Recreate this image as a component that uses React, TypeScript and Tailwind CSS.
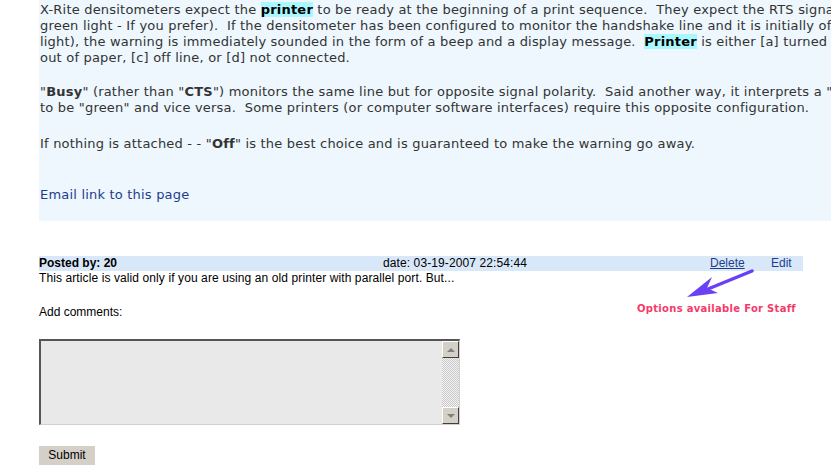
import React from "react";

const verdana = { fontFamily: '"DejaVu Sans", Verdana, sans-serif' };
const arial = { fontFamily: '"Liberation Sans", Arial, sans-serif' };

function Hl({ children }: { children: React.ReactNode }) {
  return <b className="bg-[#aaf8ff] text-black">{children}</b>;
}

function Textarea() {
  return (
    <div className="flex h-[86px] w-[421px] border-t-2 border-l-2 border-t-[#555] border-l-[#555] border-b border-r border-b-[#d4d0c8] border-r-[#d4d0c8] bg-[#e9e9e9]">
      <div className="flex-1" />
      <div className="flex w-[17px] flex-col bg-[repeating-conic-gradient(#c8c8c8_0_25%,#f4f4f4_0_50%)] bg-[length:2px_2px]">
        <div className="flex h-[17px] items-center justify-center border border-t-[#fff] border-l-[#fff] border-b-[#404040] border-r-[#404040] bg-[#d4d0c8]">
          <div className="h-0 w-0 border-x-[4px] border-b-[4px] border-x-transparent border-b-[#808080]" />
        </div>
        <div className="flex-1" />
        <div className="flex h-[17px] items-center justify-center border border-t-[#fff] border-l-[#fff] border-b-[#404040] border-r-[#404040] bg-[#d4d0c8]">
          <div className="h-0 w-0 border-x-[4px] border-t-[4px] border-x-transparent border-t-[#808080]" />
        </div>
      </div>
    </div>
  );
}

export default function App() {
  return (
    <div className="relative h-[468px] w-[831px] overflow-hidden bg-white">
      <div className="ml-[39px] w-[1000px] bg-[#edf7fd] pl-px pt-[2px] pb-[18px] text-[13px] leading-4 tracking-[0.2px] text-[#333]" style={verdana}>
        <p className="whitespace-pre">
          X-Rite densitometers expect the <Hl>printer</Hl> to be ready at the beginning of a print sequence.  They expect the RTS signal
          <br />
          green light - If you prefer).  If the densitometer has been configured to monitor the handshake line and it is initially off
          <br />
          light), the warning is immediately sounded in the form of a beep and a display message.  <Hl>Printer</Hl> is either [a] turned off
          <br />
          out of paper, [c] off line, or [d] not connected.
        </p>
        <p className="mt-[18px] whitespace-pre">
          "<b>Busy</b>" (rather than "<b>CTS</b>") monitors the same line but for opposite signal polarity.  Said another way, it interprets a "red"
          <br />
          to be "green" and vice versa.  Some printers (or computer software interfaces) require this opposite configuration.
        </p>
        <p className="mt-5 whitespace-pre">
          If nothing is attached - - "<b>Off</b>" is the best choice and is guaranteed to make the warning go away.
        </p>
        <a className="mt-[35px] block text-[#1d3d8c]">Email link to this page</a>
      </div>

      <div className="ml-[39px] mt-[35px] text-[12px] text-black" style={arial}>
        <div className="grid h-[15px] w-[764px] grid-cols-[344px_327px_61px_32px] items-center bg-[#d9e8f9] leading-[15px]">
          <b>Posted by: 20</b>
          <span className="tracking-[0.1px]">date: 03-19-2007 22:54:44</span>
          <a className="text-[#1d3d8c] underline">Delete</a>
          <a className="text-[#1d3d8c]">Edit</a>
        </div>
        <p className="leading-[15px] tracking-[0.1px]">This article is valid only if you are using an old printer with parallel port. But...</p>
        <p className="mt-[19px] leading-[15px]">Add comments:</p>
        <div className="mt-[19px]">
          <Textarea />
        </div>
        <button className="mt-[21px] h-[19px] w-[56px] bg-[#d4d0c8] text-[12px] leading-[19px] text-black">Submit</button>
      </div>

      <svg className="absolute left-[680px] top-[262px]" width="80" height="40" viewBox="0 0 80 40">
        <path d="M72 9 L28 27" stroke="#6a40f5" strokeWidth="3.5" strokeLinecap="round" />
        <path d="M7 35 L32 15 L27 26 L38 31 Z" fill="#6a40f5" />
      </svg>
      <div className="absolute left-[637px] top-[303px] text-[10px] font-bold leading-3 tracking-[0.3px] text-[#f33b6a]" style={verdana}>
        Options available For Staff
      </div>
    </div>
  );
}
